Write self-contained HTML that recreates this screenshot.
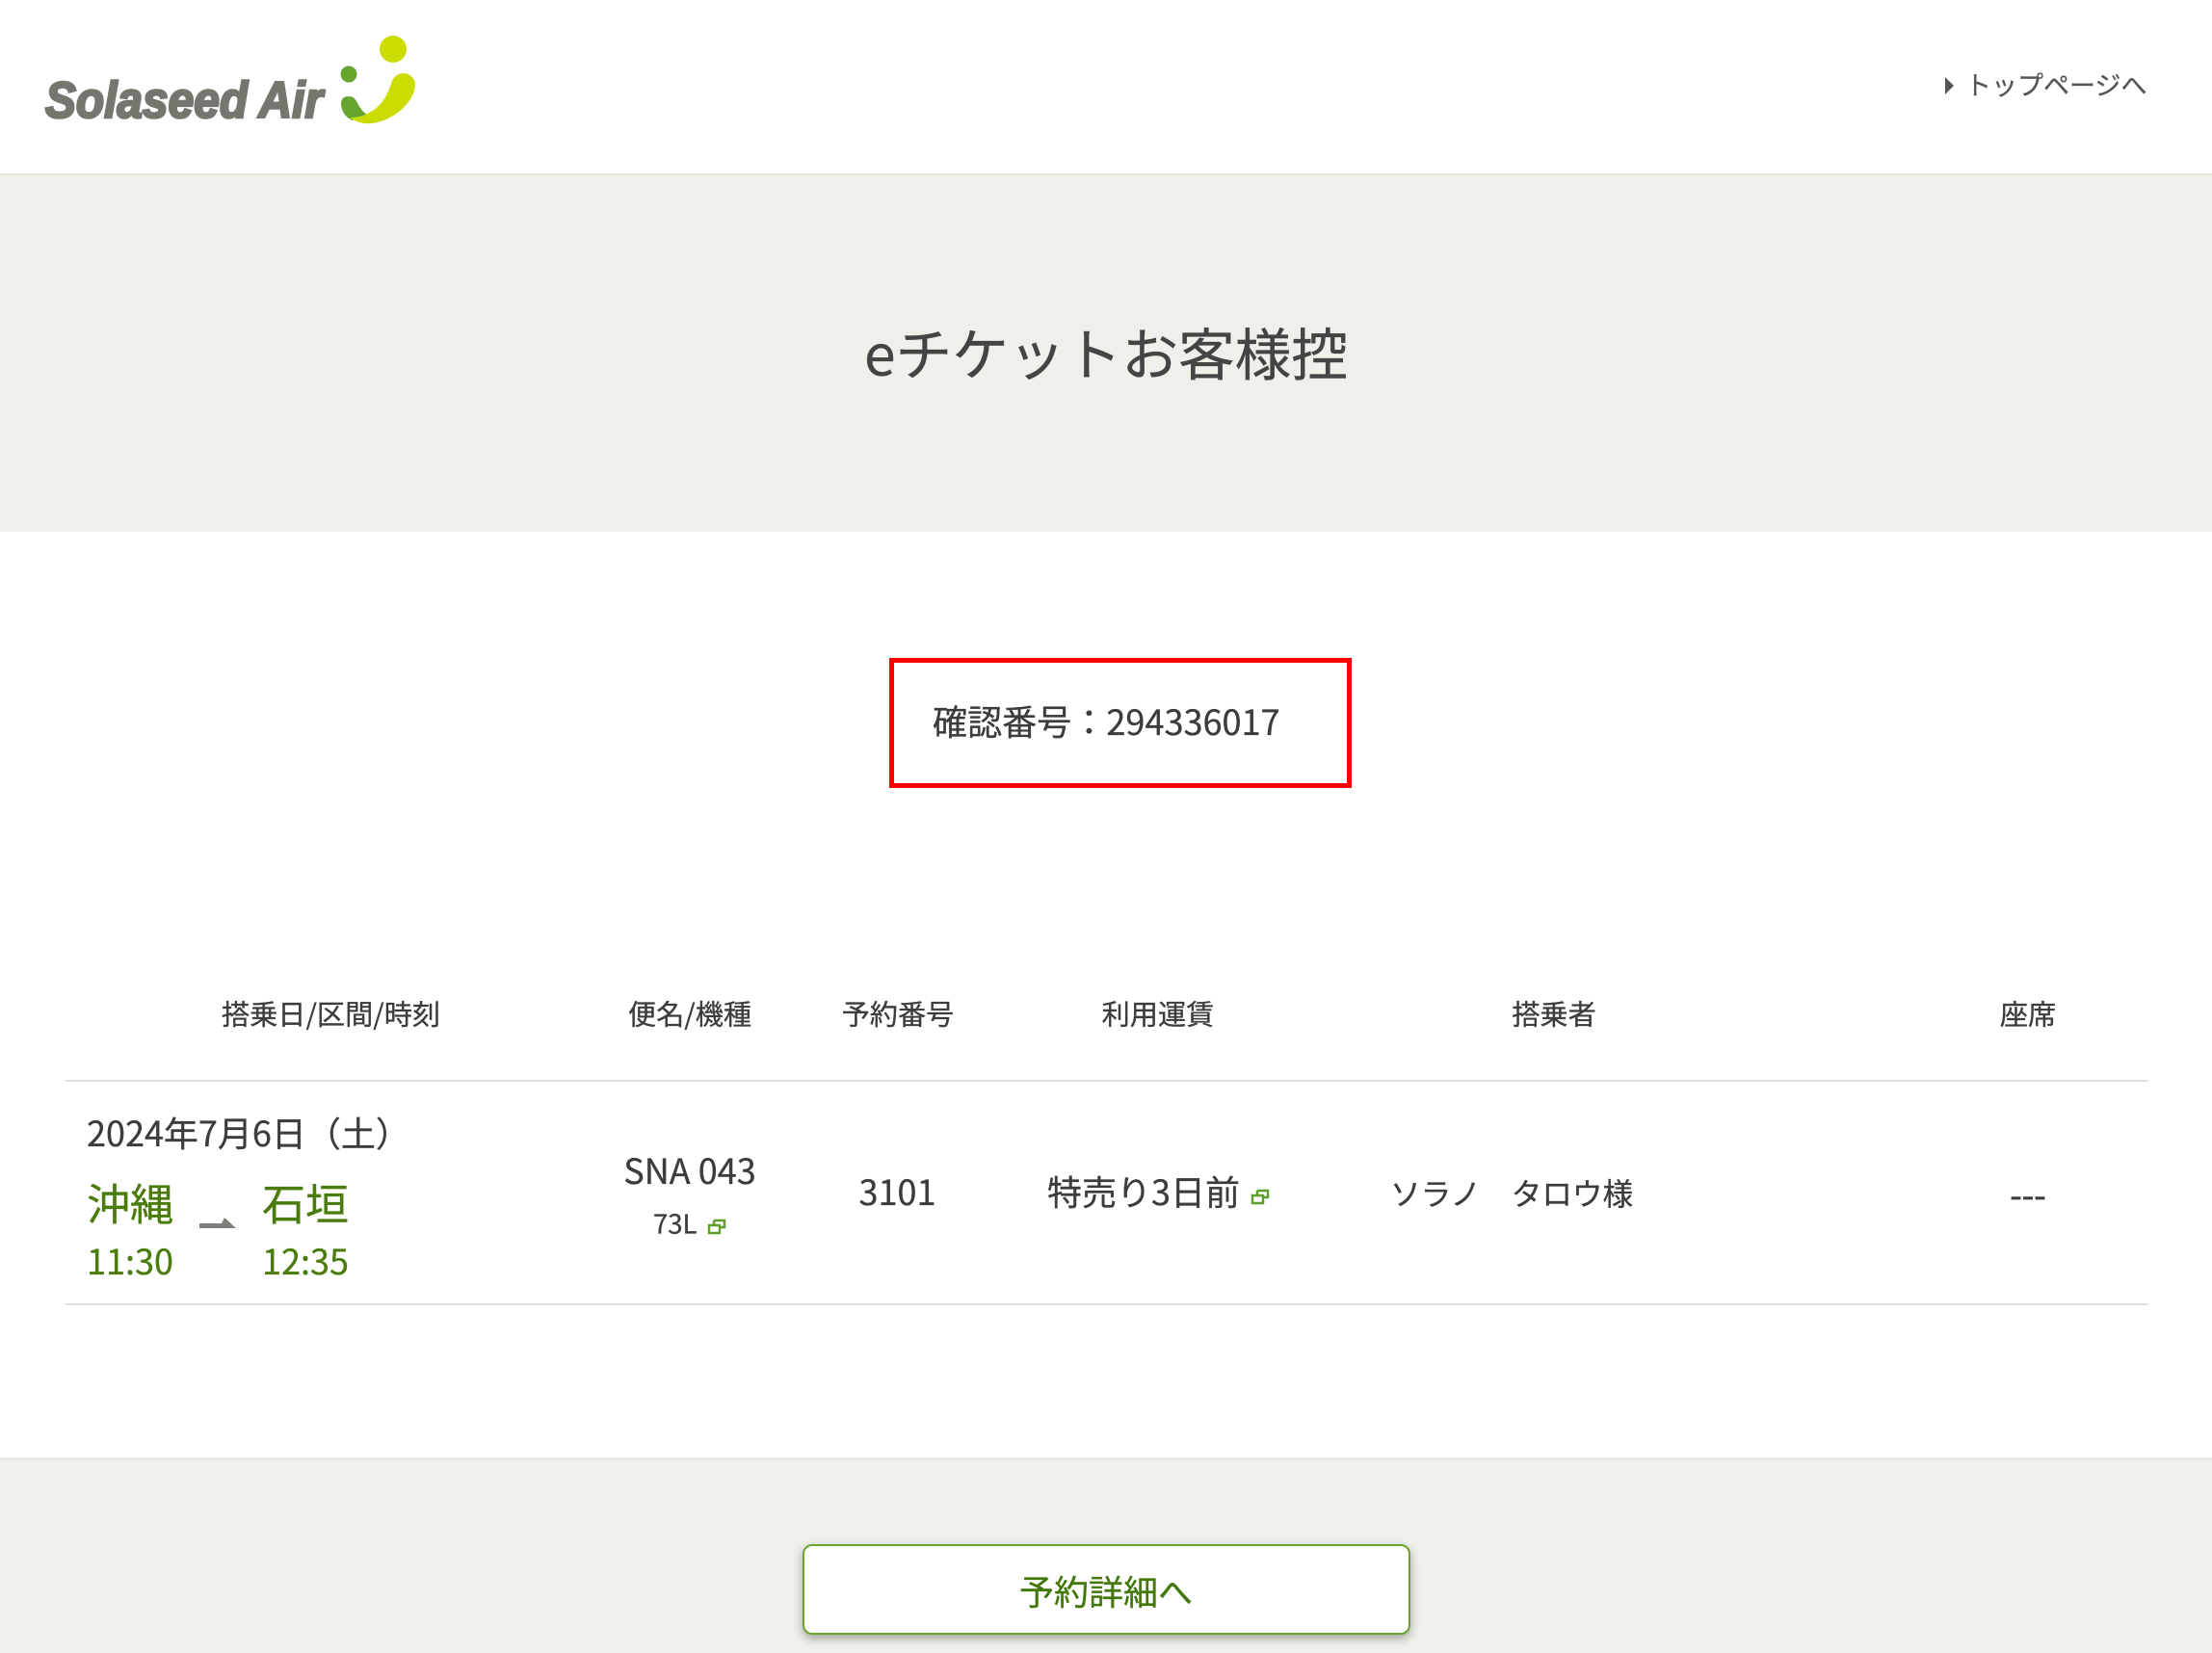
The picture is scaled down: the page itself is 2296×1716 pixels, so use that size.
<!DOCTYPE html>
<html lang="ja">
<head>
<meta charset="utf-8">
<title>eチケットお客様控</title>
<style>
html,body{margin:0;padding:0;background:#fff}
body{width:2296px;height:1716px;position:relative;overflow:hidden;font-family:"Noto Sans CJK JP","Liberation Sans",sans-serif;color:#3c3c3c}
.t{position:absolute;white-space:nowrap;line-height:1;-webkit-text-stroke:.3px currentColor}
.c{transform:translate(-50%,-50%)}
.l{transform:translateY(-50%)}
.g{color:#4a7c0c}
.bar{position:absolute;left:0;width:2296px;background:#f0efe9}
.rule{position:absolute;left:68px;width:2162px;height:2px;background:#dedede}
svg{position:absolute;overflow:visible}
</style>
</head>
<body>
<!-- header -->
<svg style="left:0;top:0" width="500" height="181" viewBox="0 0 500 181">
  <text x="47" y="122" font-family="'Liberation Sans',sans-serif" font-weight="700" font-style="italic" font-size="53" fill="#75776f" stroke="#75776f" stroke-width="2.6" textLength="288" lengthAdjust="spacingAndGlyphs">Solaseed Air</text>
  <circle cx="408" cy="51" r="14" fill="#cbdc00"/>
  <circle cx="362" cy="77" r="8.5" fill="#66a52e"/>
  <path d="M354,107 C354,102 358,100 362,100 C366,100 368,102 370,105 C373,111 376,116 381,119 L366,125 C358,122 354,114 354,107Z" fill="#66a52e"/>
  <path d="M407,84 C402,100 395,112 381,118 C376,121 370,122 363,122 C370,127 378,129 386,128 C410,125 431,105 431,87 A12.5,12.5 0 0 0 407,84Z" fill="#cbdc00"/>
</svg>
<svg style="left:2019px;top:80px" width="10" height="18" viewBox="0 0 10 18"><path d="M0,0 L9,9 L0,18Z" fill="#555"/></svg>
<div class="t l" style="left:2040px;top:86.5px;font-size:27px;color:#555">トップページへ</div>

<!-- hero -->
<div class="bar" style="top:180px;height:372px;border-top:2px solid #e6e6e0;box-sizing:border-box"></div>
<div class="t c" style="left:1148px;top:365px;font-size:58.7px;color:#444">eチケットお客様控</div>

<!-- confirmation -->
<div style="position:absolute;left:923px;top:683px;width:480px;height:135px;border:5px solid #f00;box-sizing:border-box"></div>
<div class="t l" style="left:968px;top:747.5px;font-size:36.1px">確認番号：294336017</div>

<!-- table head -->
<div class="t c" style="left:343.5px;top:1051.5px;font-size:29.2px">搭乗日/区間/時刻</div>
<div class="t c" style="left:716px;top:1051.5px;font-size:29.2px">便名/機種</div>
<div class="t c" style="left:932px;top:1051.5px;font-size:29.2px">予約番号</div>
<div class="t c" style="left:1202px;top:1051.5px;font-size:29.2px">利用運賃</div>
<div class="t c" style="left:1613px;top:1051.5px;font-size:29.2px">搭乗者</div>
<div class="t c" style="left:2105px;top:1051.5px;font-size:29.2px">座席</div>
<div class="rule" style="top:1121px"></div>

<!-- row -->
<div class="t l" style="left:90px;top:1175px;font-size:36px">2024年7月6日（土）</div>
<div class="t l g" style="left:90px;top:1247px;font-size:45px">沖縄</div>
<div class="t l g" style="left:272px;top:1247px;font-size:45px">石垣</div>
<div class="t l g" style="left:90px;top:1307.5px;font-size:36px">11:30</div>
<div class="t l g" style="left:272px;top:1307.5px;font-size:36px">12:35</div>
<svg style="left:207px;top:1264px" width="38" height="12" viewBox="0 0 38 12"><path d="M0,6 H23 L26,0 L38,11 H0Z" fill="#7d7f78"/></svg>

<div class="t c" style="left:716px;top:1214px;font-size:36px">SNA 043</div>
<div class="t l" style="left:678px;top:1268.5px;font-size:27.5px">73L</div>
<svg style="left:735px;top:1266px" width="18" height="15" viewBox="0 0 18 15"><path d="M6,1 H17 V8 H12 M1,6 H12 V14 H1Z M6,1 V6" fill="none" stroke="#5f9e2a" stroke-width="2.4"/></svg>

<div class="t c" style="left:931.5px;top:1236px;font-size:36px">3101</div>
<div class="t l" style="left:1087px;top:1236px;font-size:36px">特売り3日前</div>
<svg style="left:1299px;top:1235px" width="18" height="15" viewBox="0 0 18 15"><path d="M6,1 H17 V8 H12 M1,6 H12 V14 H1Z M6,1 V6" fill="none" stroke="#5f9e2a" stroke-width="2.4"/></svg>
<div class="t l" style="left:1443px;top:1239px;font-size:31.6px">ソラノ　タロウ様</div>
<div class="t c" style="left:2105px;top:1239px;font-size:36px;-webkit-text-stroke:.6px #3c3c3c">---</div>
<div class="rule" style="top:1353px"></div>

<!-- footer -->
<div class="bar" style="top:1513px;height:203px;border-top:3px solid #e9e9e4;box-sizing:border-box"></div>
<div style="position:absolute;left:833px;top:1603px;width:631px;height:94px;background:#fff;border:2px solid #6aa52e;border-radius:10px;box-sizing:border-box;box-shadow:0 4px 10px rgba(0,0,0,.32)"></div>
<div class="t c" style="left:1148px;top:1650.5px;font-size:36px;color:#42780a">予約詳細へ</div>
</body>
</html>
